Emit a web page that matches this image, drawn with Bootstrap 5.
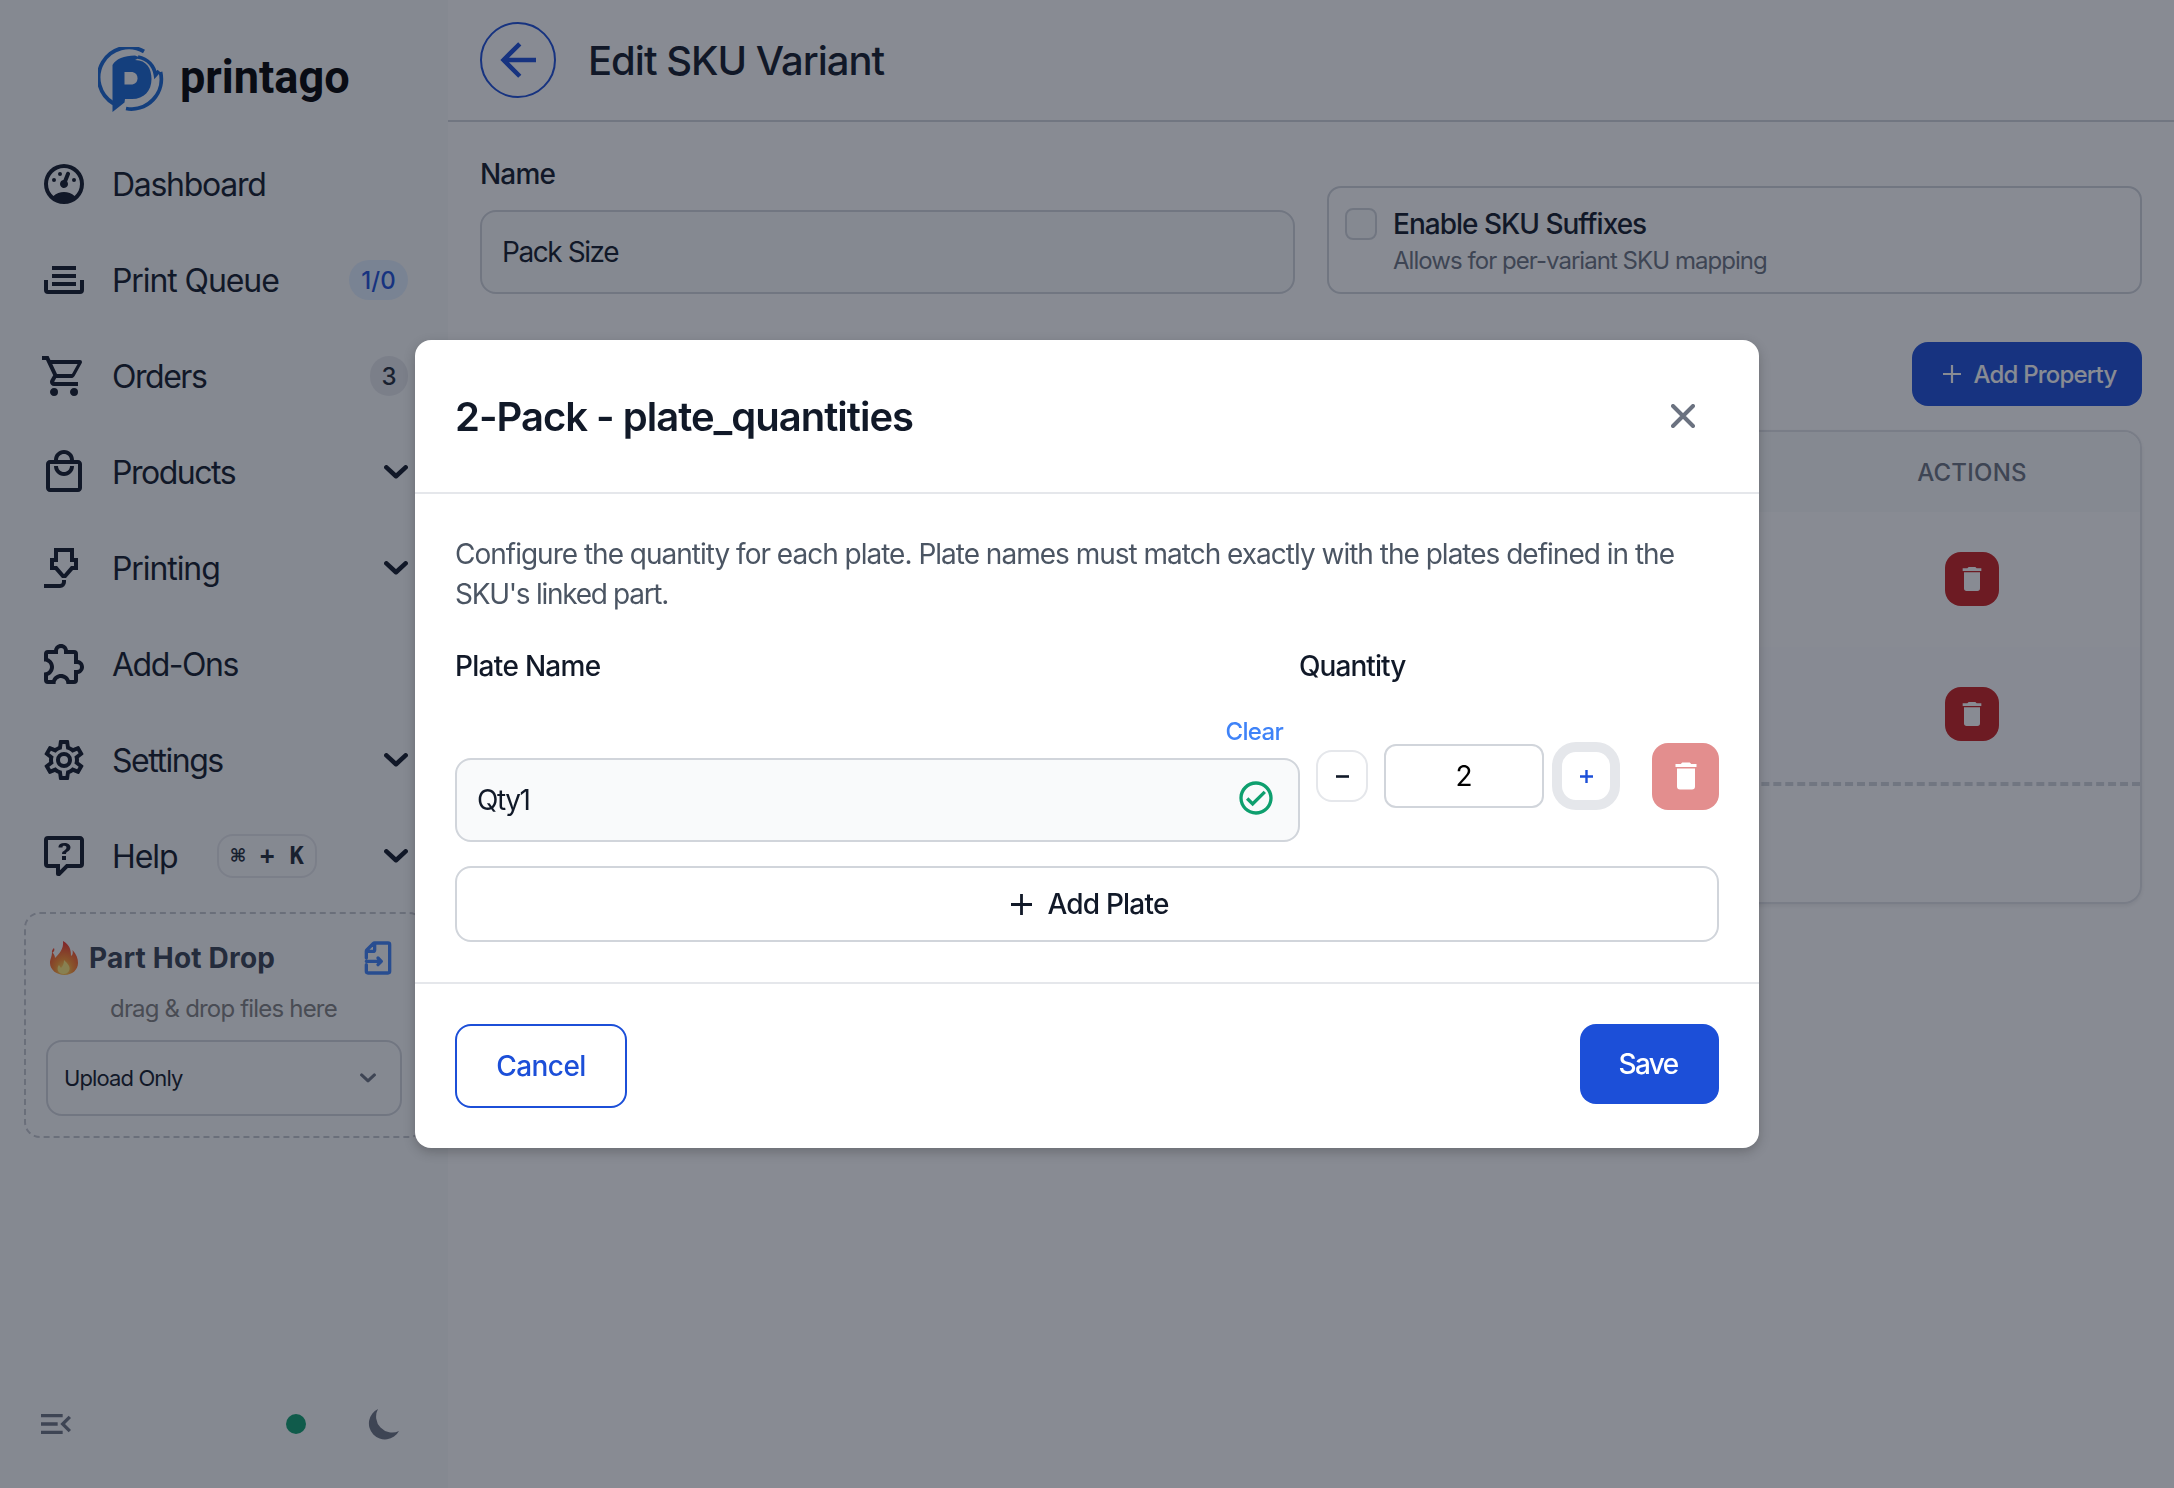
<!DOCTYPE html>
<html lang="en">
<head>
<meta charset="utf-8">
<meta name="viewport" content="width=device-width, initial-scale=1">
<title>Printago - Edit SKU Variant</title>
<link href="https://cdn.jsdelivr.net/npm/bootstrap@5.3.0/dist/css/bootstrap.min.css" rel="stylesheet">
<style>
:root{--ink:#111928;--g50:#f9fafb;--g200:#e5e7eb;--g300:#d1d5db;--g500:#6b7280;--g600:#4b5563;--blue:#1c4fd8;--red:#c81e1e;--green:#0e9f6e}
html,body{height:100%}
body{font-family:Inter,"Liberation Sans",sans-serif;font-size:28px;line-height:40px;color:var(--ink);overflow:hidden;background:#fff}
svg{display:block;flex:none}
.med{font-weight:500}
/* tracking steps */
.t20{letter-spacing:-.020em}.t25{letter-spacing:-.025em}.t29{letter-spacing:-.029em}.t34{letter-spacing:-.034em}
.t36{letter-spacing:-.0357em}.t40{letter-spacing:-.040em}.t46{letter-spacing:-.046em}.t51{letter-spacing:-.051em}.t65{letter-spacing:-.06em}
.shell{height:1488px}
.side{width:448px;background:var(--g50);flex:none}
.brand{height:136px;padding:47px 0 0 98px;gap:16px}
.brand-word{font-family:Roboto,sans-serif;font-weight:700;font-size:46px;line-height:60px;color:#000;transform-origin:0 50%;transform:scaleX(.98)}
.side-link{height:96px;padding:0 40px;font-size:32px;color:var(--ink)}
.side-link .lbl{margin-left:24px;padding-top:2px}
.pill{font-size:24px;line-height:41px;font-weight:500;border-radius:20px;height:40px;text-align:center}
.pill-blue{background:#e1effe;color:var(--blue);width:59px}
.pill-gray{background:#e5e7eb;color:#1f2a37;width:38px}
.keys{width:100px;height:44px;border:2px solid var(--g200);border-radius:16px;margin-left:40px;font-family:"DejaVu Sans Mono",monospace;font-size:24px;letter-spacing:.01em;font-weight:700;color:#1f2a37;line-height:40px}
.drop{width:401px;height:226px;margin:8px 0 0 24px;border:2px dashed #c3c6cd;border-radius:16px;padding:21px 25px 20px 20px}
.drop-title{font-weight:700;color:#374151;font-size:28px;height:46px}
.drop-title .hot{margin-left:7px;letter-spacing:.007em}
.drop-sub{font-size:24px;line-height:32px;color:#808080;margin:12px 0 15px 64px;white-space:nowrap}
.drop-pick{width:356px;height:76px;border:2px solid var(--g300);border-radius:16px;font-size:22px;padding:0 24px 0 16px}
.side-foot{height:64px;margin-top:auto;margin-bottom:32px;padding:0 48px 0 36px;color:var(--g500)}
.dot{width:20px;height:20px;border-radius:50%;background:var(--green);margin-left:210px}
.topbar{height:122px;border-bottom:2px solid var(--g300);padding:0 32px;gap:32px}
.back{width:76px;height:76px;border:2px solid var(--blue);border-radius:50%;color:var(--blue);margin-top:-1px}
.page-title{font-size:40px;font-weight:550;padding-top:1px}
.content{padding:32px}
.two{display:grid;grid-template-columns:1fr 1fr;gap:32px;align-items:end}
.field{height:84px;border:2px solid var(--g300);border-radius:16px;background:var(--g50);padding:0 20px}
.suffix{height:108px;border:2px solid var(--g300);border-radius:14px;padding:16px;gap:16px}
.tick{width:32px;height:32px;margin-top:4px;border:2px solid var(--g300);border-radius:8px;background:var(--g50);flex:none}
.hint{font-size:24px;line-height:34px;color:var(--g500)}
.add-prop{width:230px;height:64px;border-radius:16px;background:var(--blue);color:#fff;font-size:24px;font-weight:500;margin:48px 0 24px auto;gap:13px;padding-left:5px}
.add-prop span{padding-top:2px}
.grid-box{height:474px;border:2px solid #e0e2e7;border-radius:18px;overflow:hidden;box-shadow:0 2px 4px rgba(0,0,0,.08)}
.grid-head{height:80px;background:var(--g50);color:var(--g500);font-size:24px;font-weight:500;letter-spacing:.01em;padding-top:2px}
.grid-row{height:135px;padding-bottom:1px}
.grid-row.alt{background:#fdfdfe;border-bottom:4px dashed var(--g300);height:139px}
.act{width:336px;margin-left:auto}
.trash{width:54px;height:54px;border-radius:16px;background:var(--red);color:#fff}
.modal-backdrop{--bs-backdrop-bg:#111728;--bs-backdrop-opacity:.5}
.modal{--bs-modal-width:1344px;--bs-modal-margin:0px;overflow:hidden}
.modal-content{border:0;border-radius:16px;box-shadow:0 4px 12px rgba(0,0,0,.22)}
.modal-header{height:154px;padding:0 64px 0 40px;border-bottom:2px solid var(--g200)}
.modal-title{font-size:40px;font-weight:600;line-height:60px;padding-top:1px}
.modal-body{padding:40px}
.lead-in{color:var(--g600);margin-bottom:32px;white-space:nowrap}
.heads{display:grid;grid-template-columns:844px 1fr;margin-bottom:24px}
.plate{width:845px;height:132px}
.plate .field svg{margin:0 2px 4px auto}
.clear{height:44px;margin-bottom:4px;padding-right:17px;color:#3f83f8;font-size:24px;font-weight:500}
.step{width:52px;height:52px;border:2px solid var(--g200);border-radius:16px;margin-left:16px;background:#fff}
.step.ringed{box-shadow:0 0 0 8px var(--g200);color:var(--blue)}
.qty{width:160px;height:64px;border:2px solid var(--g300);border-radius:12px;margin-left:16px;color:#000}
.trash-lg{width:67px;height:67px;border-radius:16px;background:#e38e8e;color:#fff;margin-left:40px}
.add-plate{height:76px;border:2px solid var(--g300);border-radius:16px;margin-top:24px;gap:15px;font-weight:500;padding-left:6px}
.modal-footer{height:166px;border-top:2px solid var(--g200);padding:40px;align-items:flex-start}
.modal-footer>*{margin:0}
.b-cancel{width:172px;height:84px;border:2px solid var(--blue);border-radius:16px;color:var(--blue);font-weight:500}
.b-save{width:139px;height:80px;border-radius:16px;background:var(--blue);color:#fff;font-weight:500;padding-right:3px}
</style>
<script src="https://cdn.jsdelivr.net/npm/bootstrap@5.3.0/dist/js/bootstrap.bundle.min.js"></script>
</head>
<body>
<svg width="0" height="0" class="position-absolute" aria-hidden="true">
  <symbol id="i-trash" viewBox="0 0 24 24"><path fill="currentColor" d="M19,4H15.5L14.5,3H9.5L8.5,4H5V6H19M6,19A2,2 0 0,0 8,21H16A2,2 0 0,0 18,19V7H6V19Z"/></symbol>
  <symbol id="i-chev" viewBox="0 0 24 14"><path fill="none" stroke="currentColor" stroke-width="4.6" stroke-linecap="round" stroke-linejoin="round" d="M2.4 2.4 12 11.2 21.6 2.4"/></symbol>
</svg>
<div class="shell d-flex">
  <aside class="side d-flex flex-column">
    <div class="brand d-flex">
      <svg width="66" height="66" viewBox="0 0 66 66" fill="#1766d3">
        <path d="M14.500 18C18 12 26 8.500 37 8.500L42 10.500 37 13C49 13 53.500 22 53.500 32 53.500 44 46 52 34 52H27L26.500 55.500 14.500 65Z"/>
        <path d="M26.500 25V37.500H33C37 37.500 39.500 35 39.500 31.200 39.500 27.500 37 25 33 25Z" fill="#f9fafb"/>
        <path d="M15.500 56.500A30 30 0 0 1 46 4.500M40 10C50 12 56 19 57.500 28L61 24M62.500 25A30 30 0 0 1 28 61.500" fill="none" stroke="#1766d3" stroke-width="3.800"/>
      </svg>
      <span class="brand-word">printago</span>
    </div>
    <nav>
      <div class="side-link d-flex align-items-center"><svg width="48" height="48" viewBox="0 0 24 24" fill="currentColor"><path d="M12,2A10,10 0 0,0 2,12A10,10 0 0,0 12,22A10,10 0 0,0 22,12A10,10 0 0,0 12,2M12,4A8,8 0 0,1 20,12C20,14.4 19,16.5 17.3,18C15.9,16.7 14,16 12,16C10,16 8.2,16.7 6.7,18C5,16.5 4,14.4 4,12A8,8 0 0,1 12,4M14,5.89C13.62,5.9 13.26,6.15 13.1,6.54L11.81,9.77L11.71,10C11,10.13 10.41,10.6 10.14,11.26C9.73,12.29 10.23,13.45 11.26,13.86C12.29,14.27 13.45,13.77 13.86,12.74C14.12,12.08 14,11.32 13.57,10.76L13.67,10.5L14.96,7.29L14.97,7.26C15.17,6.75 14.92,6.17 14.41,5.96C14.28,5.91 14.15,5.89 14,5.89M10,6A1,1 0 0,0 9,7A1,1 0 0,0 10,8A1,1 0 0,0 11,7A1,1 0 0,0 10,6M7,9A1,1 0 0,0 6,10A1,1 0 0,0 7,11A1,1 0 0,0 8,10A1,1 0 0,0 7,9M17,9A1,1 0 0,0 16,10A1,1 0 0,0 17,11A1,1 0 0,0 18,10A1,1 0 0,0 17,9Z"/></svg><span class="lbl t40">Dashboard</span></div>
      <div class="side-link d-flex align-items-center"><svg width="48" height="48" viewBox="0 0 24 24" fill="currentColor"><path d="M18 5H6V7H18M6 9H18V11H6M2 12H4V17H20V12H22V17A2 2 0 0 1 20 19H4A2 2 0 0 1 2 17M18 13H6V15H18Z"/></svg><span class="lbl t34">Print Queue</span><span class="pill pill-blue ms-auto">1/0</span></div>
      <div class="side-link d-flex align-items-center"><svg width="48" height="48" viewBox="0 0 24 24" fill="currentColor"><path d="M17,18A2,2 0 0,1 19,20A2,2 0 0,1 17,22C15.89,22 15,21.1 15,20C15,18.89 15.89,18 17,18M1,2H4.27L5.21,4H20A1,1 0 0,1 21,5C21,5.17 20.95,5.34 20.88,5.5L17.3,11.97C16.96,12.58 16.3,13 15.55,13H8.1L7.2,14.63L7.17,14.75A0.25,0.25 0 0,0 7.42,15H19V17H7C5.89,17 5,16.1 5,15C5,14.65 5.09,14.32 5.24,14.04L6.6,11.59L3,4H1V2M7,18A2,2 0 0,1 9,20A2,2 0 0,1 7,22C5.89,22 5,21.1 5,20C5,18.89 5.89,18 7,18M16,11L18.78,6H6.14L8.5,11H16Z"/></svg><span class="lbl t46">Orders</span><span class="pill pill-gray ms-auto">3</span></div>
      <div class="side-link d-flex align-items-center"><svg width="48" height="48" viewBox="0 0 24 24" fill="currentColor"><path d="M19 6H17C17 3.2 14.8 1 12 1S7 3.2 7 6H5C3.9 6 3 6.9 3 8V20C3 21.1 3.9 22 5 22H19C20.1 22 21 21.1 21 20V8C21 6.9 20.1 6 19 6M12 3C13.7 3 15 4.3 15 6H9C9 4.3 10.3 3 12 3M19 20H5V8H19V20M12 12C10.3 12 9 10.7 9 9H7C7 11.8 9.2 14 12 14S17 11.8 17 9H15C15 10.7 13.7 12 12 12Z"/></svg><span class="lbl t46">Products</span><svg class="ms-auto" width="24" height="14"><use href="#i-chev"/></svg></div>
      <div class="side-link d-flex align-items-center"><svg width="48" height="48" viewBox="0 0 24 24" fill="currentColor" fill-rule="evenodd"><path d="M7,2H17V7H19V13H16.5L13,17H11L7.5,13H5V7H7V2M10,22H2V20H10A1,1 0 0,0 11,19V18H13V19A3,3 0 0,1 10,22M9,4V9H7V11H8.5L11.91,15H12.09L15.5,11H17V9H15V4H9Z"/></svg><span class="lbl t34">Printing</span><svg class="ms-auto" width="24" height="14"><use href="#i-chev"/></svg></div>
      <div class="side-link d-flex align-items-center"><svg width="48" height="48" viewBox="0 0 24 24" fill="currentColor"><path d="M22,13.5C22,15.26 20.7,16.72 19,16.96V20A2,2 0 0,1 17,22H13.2V21.7A2.7,2.7 0 0,0 10.5,19C9,19 7.8,20.21 7.8,21.7V22H4A2,2 0 0,1 2,20V16.2H2.3C3.79,16.2 5,15 5,13.5C5,12 3.79,10.8 2.3,10.8H2V7A2,2 0 0,1 4,5H7.04C7.28,3.3 8.74,2 10.5,2C12.26,2 13.72,3.3 13.96,5H17A2,2 0 0,1 19,7V10.04C20.7,10.28 22,11.74 22,13.5M17,15H18.5A1.5,1.5 0 0,0 20,13.5A1.5,1.5 0 0,0 18.5,12H17V7H12V5.5A1.5,1.5 0 0,0 10.5,4A1.5,1.5 0 0,0 9,5.5V7H4V9.12C5.76,9.8 7,11.5 7,13.5C7,15.5 5.75,17.2 4,17.88V20H6.12C6.8,18.25 8.5,17 10.5,17C12.5,17 14.2,18.25 14.88,20H17V15Z"/></svg><span class="lbl t46">Add-Ons</span></div>
      <div class="side-link d-flex align-items-center"><svg width="48" height="48" viewBox="0 0 24 24" fill="currentColor"><path d="M12,8A4,4 0 0,1 16,12A4,4 0 0,1 12,16A4,4 0 0,1 8,12A4,4 0 0,1 12,8M12,10A2,2 0 0,0 10,12A2,2 0 0,0 12,14A2,2 0 0,0 14,12A2,2 0 0,0 12,10M10,22C9.75,22 9.54,21.82 9.5,21.58L9.13,18.93C8.5,18.68 7.96,18.34 7.44,17.94L4.95,18.95C4.73,19.03 4.46,18.95 4.34,18.73L2.34,15.27C2.21,15.05 2.27,14.78 2.46,14.63L4.57,12.97L4.5,12L4.57,11L2.46,9.37C2.27,9.22 2.21,8.95 2.34,8.73L4.34,5.27C4.46,5.05 4.73,4.96 4.95,5.05L7.44,6.05C7.96,5.66 8.5,5.32 9.13,5.07L9.5,2.42C9.54,2.18 9.75,2 10,2H14C14.25,2 14.46,2.18 14.5,2.42L14.87,5.07C15.5,5.32 16.04,5.66 16.56,6.05L19.05,5.05C19.27,4.96 19.54,5.05 19.66,5.27L21.66,8.73C21.79,8.95 21.73,9.22 21.54,9.37L19.43,11L19.5,12L19.43,13L21.54,14.63C21.73,14.78 21.79,15.05 21.66,15.27L19.66,18.73C19.54,18.95 19.27,19.04 19.05,18.95L16.56,17.95C16.04,18.34 15.5,18.68 14.87,18.93L14.5,21.58C14.46,21.82 14.25,22 14,22H10M11.25,4L10.88,6.61C9.68,6.86 8.62,7.5 7.85,8.39L5.44,7.35L4.69,8.65L6.8,10.2C6.4,11.37 6.4,12.64 6.8,13.8L4.68,15.36L5.43,16.66L7.86,15.62C8.63,16.5 9.68,17.14 10.87,17.38L11.24,20H12.76L13.13,17.39C14.32,17.14 15.37,16.5 16.14,15.62L18.57,16.66L19.32,15.36L17.2,13.81C17.6,12.64 17.6,11.37 17.2,10.2L19.31,8.65L18.56,7.35L16.15,8.39C15.38,7.5 14.32,6.86 13.12,6.62L12.75,4H11.25Z"/></svg><span class="lbl t46">Settings</span><svg class="ms-auto" width="24" height="14"><use href="#i-chev"/></svg></div>
      <div class="side-link d-flex align-items-center"><svg width="48" height="48" viewBox="0 0 24 24" fill="currentColor"><path d="M4,2A2,2 0 0,0 2,4V16A2,2 0 0,0 4,18H8V21A1,1 0 0,0 9,22H9.5V22C9.75,22 10,21.9 10.2,21.71L13.9,18H20A2,2 0 0,0 22,16V4C22,2.89 21.1,2 20,2H4M4,4H20V16H13.08L10,19.08V16H4V4M12.19,5.5C11.3,5.5 10.59,5.68 10.05,6.04C9.5,6.4 9.22,7 9.27,7.69H11.24C11.24,7.41 11.34,7.2 11.5,7.06C11.7,6.92 11.92,6.85 12.19,6.85C12.5,6.85 12.77,6.93 12.95,7.11C13.13,7.28 13.22,7.5 13.22,7.8C13.22,8.08 13.14,8.33 13,8.54C12.83,8.76 12.62,8.94 12.36,9.08C11.84,9.4 11.5,9.68 11.29,9.92C11.1,10.16 11,10.5 11,11H13C13,10.72 13.05,10.5 13.14,10.32C13.23,10.15 13.4,10 13.66,9.85C14.12,9.64 14.5,9.36 14.79,9C15.08,8.63 15.23,8.24 15.23,7.8C15.23,7.1 14.96,6.54 14.42,6.12C13.88,5.71 13.13,5.5 12.19,5.5M11,12V14H13V12H11Z"/></svg><span class="lbl t34">Help</span><span class="keys d-flex align-items-center justify-content-center">⌘ + K</span><svg class="ms-auto" width="24" height="14"><use href="#i-chev"/></svg></div>
    </nav>
    <div class="drop">
      <div class="drop-title d-flex align-items-center">
        <svg width="36" height="40" viewBox="0 0 36 40"><defs><radialGradient id="fl" cx=".5" cy=".85" r=".8"><stop offset="0" stop-color="#ffe45a"/><stop offset=".4" stop-color="#ff8f2e"/><stop offset="1" stop-color="#f0352a"/></radialGradient></defs><path fill="url(#fl)" d="M17 3c7 4 8 9 8 15 2-1 2-4 1.500-6 4 4 5.500 9 5.500 13 0 7-6 12-13.500 12S4 32 4 25c0-4 2-6 2-11 2 2 3 4 3 6 4-4 9-9 8-17ZM8 10c1 2 0 4-2 5-.5-2 .5-4 2-5Z"/><path fill="#ffe97a" d="M18 22c4 4 7 7 5 11-2 4-9 4-11 0-1-3 0-5 1-6l2 3c2-2 3-5 3-8Z"/></svg>
        <span class="hot">Part Hot Drop</span>
        <svg class="ms-auto" width="40" height="40" viewBox="0 0 24 24" fill="none" stroke="#3f83f8" stroke-width="2" stroke-linecap="round" stroke-linejoin="round"><path d="M5 12V7.914a1 1 0 0 1 .293-.707l3.914-3.914A1 1 0 0 1 9.914 3H18a1 1 0 0 1 1 1v16a1 1 0 0 1-1 1H6a1 1 0 0 1-1-1v-4m5-13v4a1 1 0 0 1-1 1H5m0 6h9m0 0-2-2m2 2-2 2"/></svg>
      </div>
      <div class="drop-sub"><span class="t34">drag &amp; drop files here</span></div>
      <div class="drop-pick d-flex align-items-center"><span class="t40">Upload Only</span><svg class="ms-auto" width="16" height="10" color="#6b7280"><use href="#i-chev"/></svg></div>
    </div>
    <div class="side-foot d-flex align-items-center">
      <svg width="40" height="40" viewBox="0 0 24 24" fill="currentColor"><path d="M3 18h13v-2H3v2zm0-5h10v-2H3v2zm0-7v2h13V6H3zm18 9.590L17.420 12 21 8.410 19.590 7l-5 5 5 5L21 15.590z"/></svg>
      <span class="dot"></span>
      <svg class="ms-auto" width="32" height="32" viewBox="0 0 32 32" fill="currentColor"><path d="M10 1A16 16 0 1 0 31 23 16 16 0 0 1 10 1Z"/></svg>
    </div>
  </aside>
  <main class="flex-grow-1">
    <header class="topbar d-flex align-items-center">
      <span class="back d-flex align-items-center justify-content-center"><svg width="54" height="54" viewBox="0 0 24 24" fill="currentColor"><path d="M20,11V13H8L13.5,18.5L12.08,19.92L4.16,12L12.08,4.08L13.5,5.5L8,11H20Z"/></svg></span>
      <span class="page-title t25">Edit SKU Variant</span>
    </header>
    <div class="content">
      <div class="two">
        <div><div class="med mb-3"><span class="t29">Name</span></div><div class="field d-flex align-items-center"><span class="t51">Pack Size</span></div></div>
        <div class="suffix d-flex"><span class="tick"></span><div><div class="med"><span class="t36">Enable SKU Suffixes</span></div><div class="hint"><span class="t40">Allows for per-variant SKU mapping</span></div></div></div>
      </div>
      <div class="add-prop d-flex align-items-center justify-content-center"><svg width="18" height="18" viewBox="0 0 18 18"><path stroke="#fff" stroke-width="2.200" d="M9 0V18M0 9H18"/></svg><span class="t34">Add Property</span></div>
      <div class="grid-box">
        <div class="grid-head d-flex align-items-center"><div class="act text-center">ACTIONS</div></div>
        <div class="grid-row d-flex align-items-center"><div class="act d-flex justify-content-center"><span class="trash d-flex align-items-center justify-content-center"><svg width="32" height="32"><use href="#i-trash"/></svg></span></div></div>
        <div class="grid-row alt d-flex align-items-center"><div class="act d-flex justify-content-center"><span class="trash d-flex align-items-center justify-content-center"><svg width="32" height="32"><use href="#i-trash"/></svg></span></div></div>
      </div>
    </div>
  </main>
</div>

<div class="modal-backdrop show"></div>
<div class="modal d-block" tabindex="-1" role="dialog">
  <div class="modal-dialog modal-dialog-centered">
    <div class="modal-content">
      <div class="modal-header">
        <h5 class="modal-title t25">2-Pack - plate_quantities</h5>
        <svg class="ms-auto" width="24" height="24" viewBox="0 0 24 24"><path stroke="#6b7280" stroke-width="4" stroke-linecap="round" d="M2 2 22 22M22 2 2 22"/></svg>
      </div>
      <div class="modal-body">
        <div class="lead-in"><span class="t36">Configure the quantity for each plate. Plate names must match exactly with the plates defined in the</span><br><span class="t46">SKU's linked part.</span></div>
        <div class="heads med"><div><span class="t25">Plate Name</span></div><div><span class="t34">Quantity</span></div></div>
        <div class="d-flex align-items-center">
          <div class="plate">
            <div class="clear d-flex align-items-center justify-content-end"><span class="t29">Clear</span></div>
            <div class="field d-flex align-items-center"><span class="t51">Qty1</span><svg width="40" height="40" viewBox="0 0 24 24" fill="#0e9f6e"><path d="M12 2C6.500 2 2 6.500 2 12S6.500 22 12 22 22 17.500 22 12 17.500 2 12 2M12 20C7.590 20 4 16.410 4 12S7.590 4 12 4 20 7.590 20 12 16.410 20 12 20M16.590 7.580L10 14.170L7.410 11.590L6 13L10 17L18 9L16.590 7.580Z"/></svg></div>
          </div>
          <span class="step d-flex align-items-center justify-content-center"><svg width="13" height="13" viewBox="0 0 13 13"><path stroke="currentColor" stroke-width="2.600" d="M0 6.500H13"/></svg></span>
          <span class="qty d-flex align-items-center justify-content-center">2</span>
          <span class="step ringed d-flex align-items-center justify-content-center"><svg width="13" height="13" viewBox="0 0 13 13"><path stroke="currentColor" stroke-width="2.400" d="M0 6.500H13M6.500 0V13"/></svg></span>
          <span class="trash-lg d-flex align-items-center justify-content-center"><svg width="36" height="36"><use href="#i-trash"/></svg></span>
        </div>
        <div class="add-plate d-flex align-items-center justify-content-center"><svg width="21" height="21" viewBox="0 0 21 21"><path stroke="currentColor" stroke-width="2.800" d="M10.500 0V21M0 10.500H21"/></svg><span class="t29">Add Plate</span></div>
      </div>
      <div class="modal-footer justify-content-between">
        <span class="b-cancel t20 d-flex align-items-center justify-content-center">Cancel</span>
        <span class="b-save t65 d-flex align-items-center justify-content-center">Save</span>
      </div>
    </div>
  </div>
</div>
</body>
</html>
